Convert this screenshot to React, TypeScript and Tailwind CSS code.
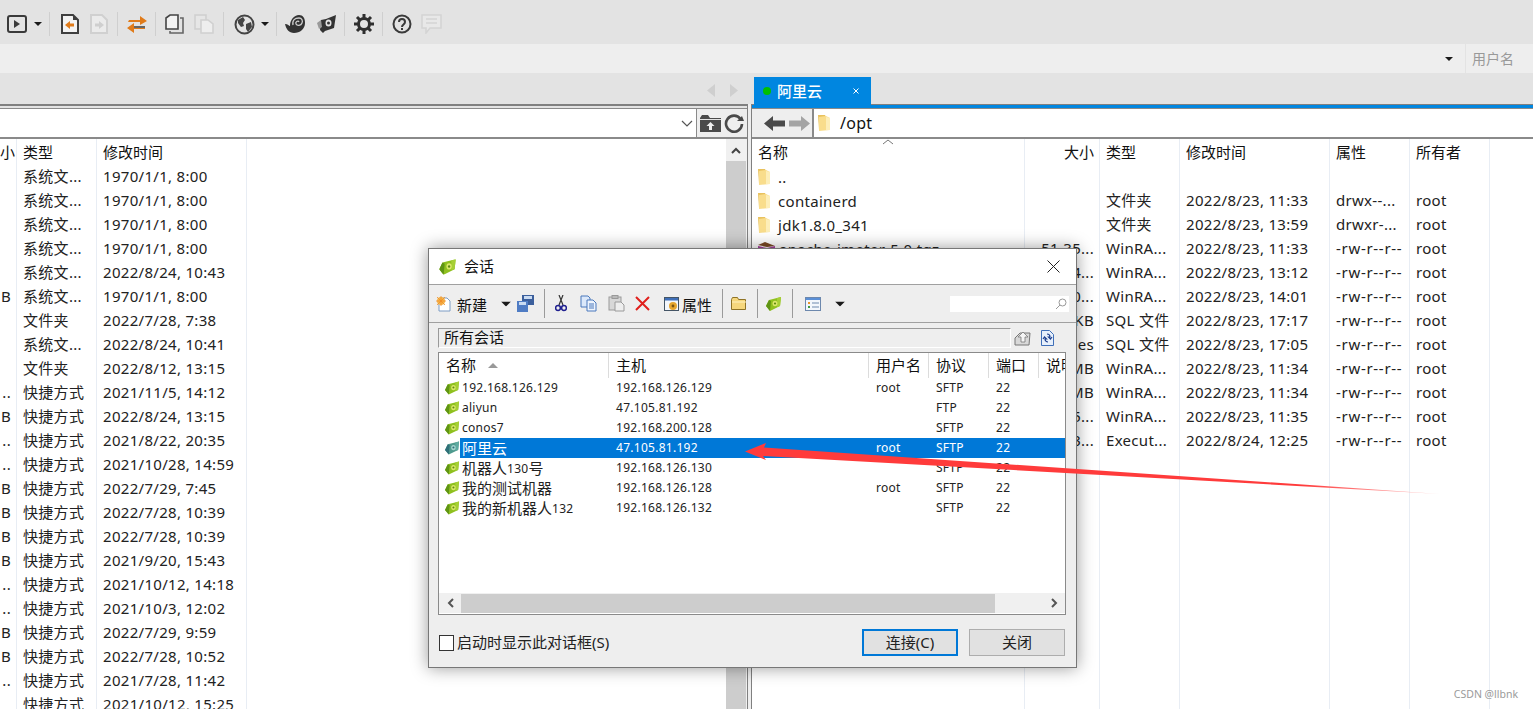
import React from "react";

const Sep = ({ ml }: { ml: string }) => <div className={`w-px h-[24px] bg-[#cfcfcf] ${ml}`} />;
const Caret = ({ cls = "" }: { cls?: string }) => (
  <svg width="8" height="4" viewBox="0 0 8 4" className={cls}><path d="M0 0h8L4 4z" fill="#1a1a1a" /></svg>
);

const Folder = ({ cls = "" }: { cls?: string }) => (
  <svg width="13" height="18" viewBox="0 0 13 18" className={cls}>
    <path d="M0 1h7l1 2v13H1z" fill="#e9c25e" />
    <path d="M1 3l7-1 4 2v12l-11 1z" fill="#f9dd8c" />
    <path d="M8 3l4 1v12H8z" fill="#fdeeb8" />
  </svg>
);

const Session = ({ gray = false, cls = "" }: { gray?: boolean; cls?: string }) => (
  <svg width="16" height="14" viewBox="0 0 16 14" className={cls}>
    <path d="M0 9l3-6 12-3-1 9-10 5z" fill={gray ? "#4f9a8e" : "#8fc01f"} />
    <path d="M0 9l3-6 2 1-1 10z" fill={gray ? "#2f6f78" : "#5f9414"} />
    <path d="M11 1l4-1-1 9-3 1z" fill={gray ? "#5faaa0" : "#a6cf35"} />
    <ellipse cx="9" cy="6.500" rx="2.400" ry="2.800" fill={gray ? "#a5d5cf" : "#dbe86a"} />
    <circle cx="9" cy="6.500" r="1.100" fill={gray ? "#2f6f78" : "#5f8a14"} />
  </svg>
);

const leftRows: [string, string, string][] = [
  ["", "系统文...", "1970/1/1, 8:00"],
  ["", "系统文...", "1970/1/1, 8:00"],
  ["", "系统文...", "1970/1/1, 8:00"],
  ["", "系统文...", "1970/1/1, 8:00"],
  ["", "系统文...", "2022/8/24, 10:43"],
  ["B", "系统文...", "1970/1/1, 8:00"],
  ["", "文件夹", "2022/7/28, 7:38"],
  ["", "系统文...", "2022/8/24, 10:41"],
  ["", "文件夹", "2022/8/12, 13:15"],
  ["..", "快捷方式", "2021/11/5, 14:12"],
  ["B", "快捷方式", "2022/8/24, 13:15"],
  ["..", "快捷方式", "2021/8/22, 20:35"],
  ["..", "快捷方式", "2021/10/28, 14:59"],
  ["B", "快捷方式", "2022/7/29, 7:45"],
  ["B", "快捷方式", "2022/7/28, 10:39"],
  ["B", "快捷方式", "2022/7/28, 10:39"],
  ["B", "快捷方式", "2021/9/20, 15:43"],
  ["..", "快捷方式", "2021/10/12, 14:18"],
  ["..", "快捷方式", "2021/10/3, 12:02"],
  ["B", "快捷方式", "2022/7/29, 9:59"],
  ["B", "快捷方式", "2022/7/28, 10:52"],
  ["..", "快捷方式", "2021/7/28, 11:42"],
  ["", "快捷方式", "2021/10/12, 15:25"],
];

const rightRows: [string, string, string, string, string, string][] = [
  ["..", "", "", "", "", ""],
  ["containerd", "", "文件夹", "2022/8/23, 11:33", "drwx--...", "root"],
  ["jdk1.8.0_341", "", "文件夹", "2022/8/23, 13:59", "drwxr-...", "root"],
  ["apache-jmeter-5.0.tgz", "51.35...", "WinRA...", "2022/8/23, 11:33", "-rw-r--r--", "root"],
  ["", "4...", "WinRA...", "2022/8/23, 13:12", "-rw-r--r--", "root"],
  ["", "0...", "WinRA...", "2022/8/23, 14:01", "-rw-r--r--", "root"],
  ["", "KB", "SQL 文件", "2022/8/23, 17:17", "-rw-r--r--", "root"],
  ["", "es", "SQL 文件", "2022/8/23, 17:05", "-rw-r--r--", "root"],
  ["", "MB", "WinRA...", "2022/8/23, 11:34", "-rw-r--r--", "root"],
  ["", "MB", "WinRA...", "2022/8/23, 11:34", "-rw-r--r--", "root"],
  ["", "5...", "WinRA...", "2022/8/23, 11:35", "-rw-r--r--", "root"],
  ["", "3...", "Execut...", "2022/8/24, 12:25", "-rw-r--r--", "root"],
];

const sessions = [
  ["192.168.126.129", "192.168.126.129", "root", "SFTP"],
  ["aliyun", "47.105.81.192", "", "FTP"],
  ["conos7", "192.168.200.128", "", "SFTP"],
  ["阿里云", "47.105.81.192", "root", "SFTP"],
  ["机器人130号", "192.168.126.130", "", "SFTP"],
  ["我的测试机器", "192.168.126.128", "root", "SFTP"],
  ["我的新机器人132", "192.168.126.132", "", "SFTP"],
];

function TopToolbar() {
  return (
    <div className="h-[44px] bg-[#e3e3e3] flex items-center shrink-0 pt-[4px]">
      <svg width="20" height="20" viewBox="0 0 20 20" className="ml-[7px]">
        <rect x="1" y="2" width="18" height="16" rx="2" fill="none" stroke="#3a3a3a" strokeWidth="2" />
        <path d="M7 6l6 4-6 4z" fill="#3a3a3a" />
      </svg>
      <Caret cls="ml-[7px]" />
      <Sep ml="ml-[7px]" />
      <svg width="18" height="20" viewBox="0 0 18 20" className="ml-[11px]">
        <path d="M1 1h11l5 5v13H1z" fill="#f3f3f3" stroke="#3f3f3f" strokeWidth="2" />
        <path d="M12 1l5 5h-5z" fill="#3f3f3f" />
        <path d="M4 11l5-4v2.500h4v3H9V15z" fill="#e07b1a" />
      </svg>
      <svg width="18" height="20" viewBox="0 0 18 20" className="ml-[11px]">
        <path d="M1 1h11l5 5v13H1z" fill="#ebebeb" stroke="#d0d0d0" strokeWidth="2" />
        <path d="M14 11l-5-4v2.500H5v3h4V15z" fill="#cfcfcf" />
      </svg>
      <Sep ml="ml-[9px]" />
      <svg width="22" height="20" viewBox="0 0 22 20" className="ml-[8px]">
        <path d="M3 6h11V2l7 5-7 4V8H2z" fill="#e07b1a" />
        <path d="M19 12H8V9L1 14l7 5v-4h11z" fill="#e07b1a" />
        <path d="M8 12h11v2H8z" fill="#666" />
      </svg>
      <Sep ml="ml-[7px]" />
      <svg width="20" height="20" viewBox="0 0 20 20" className="ml-[9px]">
        <path d="M1 4l4-3h8v14H1z" fill="#f3f3f3" stroke="#444" strokeWidth="1.600" />
        <path d="M15 4h3v15H5v-2" fill="none" stroke="#666" strokeWidth="1.600" />
      </svg>
      <svg width="20" height="20" viewBox="0 0 20 20" className="ml-[9px]">
        <rect x="1" y="1" width="11" height="14" fill="#e6e6e6" stroke="#d0d0d0" strokeWidth="1.600" />
        <path d="M7 6h7l5 4v9H7z" fill="#eee" stroke="#d0d0d0" strokeWidth="1.600" />
      </svg>
      <Sep ml="ml-[9px]" />
      <svg width="21" height="21" viewBox="0 0 21 21" className="ml-[10px]">
        <circle cx="10.500" cy="10.500" r="9" fill="#e3e3e3" stroke="#444" strokeWidth="2" />
        <path d="M4 6l5-3 2 3-2 3 1 3-3 1-3-4zM12 10l5-2 1 5-4 5-2-3z" fill="#444" />
      </svg>
      <Caret cls="ml-[6px]" />
      <Sep ml="ml-[7px]" />
      <svg width="22" height="20" viewBox="0 0 22 20" className="ml-[7px]">
        <path d="M1 10c3 0 4 2 5 2 0-6 4-11 9-11 4 0 6 3 6 8 0 6-5 10-11 10C5 19 2 15 1 10z" fill="#333" />
        <path d="M9 11c-1-5 2-7 6-7 3 0 4 3 3 5-1 3-5 3-6 1-1-2 2-4 3-2" fill="none" stroke="#cfcfcf" strokeWidth="1.300" />
      </svg>
      <svg width="21" height="20" viewBox="0 0 21 20" className="ml-[10px]">
        <path d="M5 6l5-1 10-4-2 13-9 3-2 2-3-3z" fill="#333" />
        <path d="M1 9l4-3 1 7-3 2z" fill="#9a9a9a" />
        <ellipse cx="12.500" cy="9" rx="3" ry="3.600" fill="#e3e3e3" />
        <circle cx="12.500" cy="9" r="1.500" fill="#333" />
      </svg>
      <Sep ml="ml-[7px]" />
      <svg width="20" height="20" viewBox="0 0 20 20" className="ml-[9px]">
        <circle cx="10" cy="10" r="5.500" fill="none" stroke="#2f2f2f" strokeWidth="3" />
        <path d="M10 0v4M10 16v4M0 10h4M16 10h4M3 3l3 3M14 14l3 3M17 3l-3 3M6 14l-3 3" stroke="#2f2f2f" strokeWidth="3" />
      </svg>
      <Sep ml="ml-[8px]" />
      <svg width="20" height="20" viewBox="0 0 20 20" className="ml-[9px]">
        <circle cx="10" cy="10" r="8.500" fill="none" stroke="#3a3a3a" strokeWidth="2" />
        <path d="M7 8c0-4 6-4 6 0 0 2.500-3 2.500-3 5" fill="none" stroke="#3a3a3a" strokeWidth="2" />
        <rect x="9" y="14" width="2" height="2" fill="#3a3a3a" />
      </svg>
      <svg width="21" height="20" viewBox="0 0 21 20" className="ml-[9px]">
        <path d="M1 1h19v13H9l-4 5v-5H1z" fill="#e8e8e8" stroke="#d4d4d4" strokeWidth="1.600" />
        <path d="M5 5h11M5 9h11" stroke="#d4d4d4" strokeWidth="1.400" />
      </svg>
    </div>
  );
}

function LeftPane() {
  return (
    <div className="w-[747px] shrink-0 flex flex-col border-t-2 border-[#808080] h-full overflow-hidden">
      <div className="h-[3px] bg-[#e3e3e3] border-b border-[#8a8a8a] shrink-0" />
      <div className="h-[30px] flex shrink-0 border-b-2 border-[#8a8a8a]">
        <div className="w-[697px] bg-white border-r border-[#8a8a8a] flex items-center justify-end pr-[3px]">
          <svg width="12" height="7" viewBox="0 0 12 7"><path d="M1 1l5 5 5-5" fill="none" stroke="#555" strokeWidth="1.200" /></svg>
        </div>
        <div className="flex-1 bg-[#eeeeee] flex items-center pl-[3px] gap-[3px]">
          <svg width="21" height="17" viewBox="0 0 21 17">
            <path d="M0 3l2-3h6l2 3h11v14H0z" fill="#4a4a4a" />
            <path d="M0 4h21v1H0z" fill="#e3e3e3" />
            <path d="M10.500 7l4 4h-2.500v4h-3v-4H6.500z" fill="#eee" />
          </svg>
          <svg width="20" height="20" viewBox="0 0 20 20">
            <path d="M16.500 6A8 8 0 1 0 18 11" fill="none" stroke="#4a4a4a" strokeWidth="2.600" />
            <path d="M20 8h-7l5-5z" fill="#4a4a4a" />
          </svg>
        </div>
      </div>
      <div className="flex flex-1 min-h-0">
        <div className="w-[726px] bg-white flex flex-col overflow-hidden">
          <div className="grid grid-cols-[17px_80px_150px_1fr] h-[26px] shrink-0 text-[15px] text-[#111]">
            <div className="border-r border-[#e8edf4] text-right pr-[5px] leading-[26px]">小</div>
            <div className="border-r border-[#e8edf4] pl-[6px] leading-[26px]">类型</div>
            <div className="border-r border-[#e8edf4] pl-[6px] leading-[26px]">修改时间</div>
            <div />
          </div>
          {leftRows.map((r, i) => (
            <div key={i} className="grid grid-cols-[17px_80px_150px_1fr] h-[24px] shrink-0 text-[15px] text-[#222] tracking-[0.3px]">
              <div className="border-r border-[#e8edf4] text-right pr-[5px] leading-[23px]">{r[0]}</div>
              <div className="border-r border-[#e8edf4] pl-[6px] leading-[23px] whitespace-nowrap">{r[1]}</div>
              <div className="border-r border-[#e8edf4] pl-[6px] leading-[23px] whitespace-nowrap">{r[2]}</div>
              <div />
            </div>
          ))}
        </div>
        <div className="w-[20px] bg-[#f0f0f0] flex flex-col shrink-0">
          <div className="h-[22px] flex items-center justify-center">
            <svg width="10" height="7" viewBox="0 0 10 7"><path d="M1 6l4-4 4 4" fill="none" stroke="#444" strokeWidth="2" /></svg>
          </div>
          <div className="flex-1 bg-[#cdcdcd]" />
        </div>
        <div className="w-px bg-[#f0f0f0]" />
      </div>
    </div>
  );
}

function RightPane() {
  const col = "grid grid-cols-[273px_75px_80px_150px_80px_80px_1fr]";
  const cell = "border-r border-[#e8edf4]";
  return (
    <div className="flex-1 min-w-0 flex flex-col h-full overflow-hidden border-l border-[#808080]">
      <div className="h-[5px] shrink-0 border-t border-[#808080] bg-[#0086e0] border-b border-b-[#8a8a8a]" />
      <div className="h-[30px] flex shrink-0 border-b-2 border-[#8a8a8a]">
        <div className="w-[60px] bg-[#eeeeee] flex items-center pl-[12px] gap-[4px]">
          <svg width="21" height="15" viewBox="0 0 21 15"><path d="M0 7.500L9 0v4.500h12v6H9V15z" fill="#4a4a4a" /></svg>
          <svg width="21" height="15" viewBox="0 0 21 15"><path d="M21 7.500L12 0v4.500H0v6h12V15z" fill="#a4a4a4" /></svg>
        </div>
        <div className="flex-1 bg-white border-l-2 border-[#8a8a8a] flex items-center pl-[4px]">
          <Folder />
          <span className="ml-[9px] text-[16px] text-[#111] tracking-[0.3px]">/opt</span>
        </div>
      </div>
      <div className="flex-1 min-h-0 bg-white flex flex-col overflow-hidden relative">
        <svg width="10" height="6" viewBox="0 0 10 6" className="absolute left-[131px] top-0"><path d="M0 5l5-4 5 4" fill="none" stroke="#777" strokeWidth="1" /></svg>
        <div className={`${col} h-[26px] shrink-0 text-[15px] text-[#111] leading-[26px]`}>
          <div className={`${cell} pl-[6px]`}>名称</div>
          <div className={`${cell} text-right pr-[5px]`}>大小</div>
          <div className={`${cell} pl-[6px]`}>类型</div>
          <div className={`${cell} pl-[6px]`}>修改时间</div>
          <div className={`${cell} pl-[6px]`}>属性</div>
          <div className={`${cell} pl-[6px]`}>所有者</div>
          <div />
        </div>
        {Array.from({ length: 23 }).map((_, i) => {
          const r = rightRows[i];
          return (
            <div key={i} className={`${col} h-[24px] shrink-0 text-[15px] text-[#222] leading-[23px] whitespace-nowrap tracking-[0.3px]`}>
              <div className={`${cell} flex items-center pl-[6px] overflow-hidden`}>
                {r && i < 3 && <Folder />}
                {r && i === 3 && (
                  <svg width="20" height="18" viewBox="0 0 20 18" className="ml-[-1px] mr-[-1px]">
                    <path d="M1 5l7-3 10 4-8 1z" fill="#7a4a24" />
                    <path d="M1 6l9 2 8-2v4H1z" fill="#a63fa0" />
                    <path d="M1 10h17v4H1z" fill="#5a5a8a" />
                  </svg>
                )}
                {r && r[0] && <span className={i === 3 ? "ml-[3px]" : "ml-[7px]"}>{r[0]}</span>}
              </div>
              <div className={`${cell} text-right pr-[5px]`}>{r ? r[1] : ""}</div>
              <div className={`${cell} pl-[6px]`}>{r ? r[2] : ""}</div>
              <div className={`${cell} pl-[6px]`}>{r ? r[3] : ""}</div>
              <div className={`${cell} pl-[6px] ${r && r[4].startsWith("-") ? "tracking-[0.7px]" : ""}`}>{r ? r[4] : ""}</div>
              <div className={`${cell} pl-[6px]`}>{r ? r[5] : ""}</div>
              <div />
            </div>
          );
        })}
      </div>
    </div>
  );
}

function DialogToolbar() {
  const dsep = "w-px h-[29px] bg-[#9a9a9a]";
  return (
    <div className="h-[38px] flex items-center border-b border-[#a0a0a0] shrink-0 relative pl-[7px] text-[15px] text-[#111]">
      <svg width="16" height="16" viewBox="0 0 16 16">
        <path d="M3 2h8l3 3v10H3z" fill="#fff" stroke="#7d9cc4" />
        <circle cx="5" cy="5" r="4" fill="#f6b84a" />
        <path d="M1 1l8 8M9 1L1 9M5 0v10M0 5h10" stroke="#f08a2a" strokeWidth="0.800" />
      </svg>
      <span className="ml-[5px] w-[30px] mt-[3px]">新建</span>
      <Caret cls="ml-[15px] scale-125" />
      <svg width="17" height="17" viewBox="0 0 17 17" className="ml-[7px]">
        <path d="M5 0h12v10H5z" fill="#3b5f9c" />
        <path d="M0 6h11v11H0z" fill="#4f7cc4" />
        <path d="M2 7h7v3H2z" fill="#c9dbf2" />
        <path d="M7 1h8v3H7z" fill="#c9dbf2" />
      </svg>
      <div className={`${dsep} ml-[10px]`} />
      <svg width="12" height="17" viewBox="0 0 12 17" className="ml-[10px]">
        <path d="M4 0l4 10M8 0L4 10" stroke="#333" strokeWidth="1.200" />
        <circle cx="3" cy="13" r="2.400" fill="none" stroke="#1f1f8f" strokeWidth="1.500" />
        <circle cx="9" cy="13" r="2.400" fill="none" stroke="#1f1f8f" strokeWidth="1.500" />
      </svg>
      <svg width="17" height="17" viewBox="0 0 17 17" className="ml-[13px]">
        <path d="M1 1h7l2 2v9H1z" fill="#dbe8fa" stroke="#4a78bc" />
        <path d="M7 5h6l3 3v8H7z" fill="#eef4fd" stroke="#4a78bc" />
        <path d="M9 9h5M9 11h5M9 13h5" stroke="#4a78bc" />
      </svg>
      <svg width="17" height="17" viewBox="0 0 17 17" className="ml-[11px]">
        <rect x="1" y="2" width="12" height="13" fill="#d8d8d8" stroke="#9a9a9a" />
        <rect x="4" y="0.500" width="6" height="3" fill="#bbb" stroke="#9a9a9a" />
        <path d="M7 7h6l3 3v6H7z" fill="#eee" stroke="#9a9a9a" />
      </svg>
      <svg width="15" height="15" viewBox="0 0 15 15" className="ml-[10px]">
        <path d="M1 1l13 13M14 1L1 14" stroke="#e0201c" strokeWidth="2" />
      </svg>
      <svg width="16" height="16" viewBox="0 0 16 16" className="ml-[14px]">
        <rect x="0.500" y="1.500" width="14" height="13" fill="#f4f7fb" stroke="#456" />
        <path d="M1 2h13v2.500H1z" fill="#3f6fb8" />
        <circle cx="9" cy="10" r="4" fill="#e6a62e" />
        <circle cx="9" cy="10" r="1.400" fill="#7a5513" />
      </svg>
      <span className="ml-[2px] w-[30px] mt-[3px]">属性</span>
      <div className={`${dsep} ml-[10px]`} />
      <svg width="16" height="13" viewBox="0 0 16 13" className="ml-[8px]">
        <path d="M0.500 2.500l1-2h5l1 2h7v10H0.500z" fill="#f6d77c" stroke="#8f7326" />
        <path d="M1 5h14" stroke="#fff2bf" />
      </svg>
      <div className={`${dsep} ml-[10px]`} />
      <Session cls="ml-[8px]" />
      <div className={`${dsep} ml-[10px]`} />
      <svg width="16" height="14" viewBox="0 0 16 14" className="ml-[12px]">
        <rect x="0.500" y="0.500" width="15" height="13" fill="#f2f6fc" stroke="#6d88ad" />
        <path d="M1 1h14v2H1z" fill="#5a8fd6" />
        <path d="M3 5h2v2H3z" fill="#e9952c" />
        <path d="M3 9h2v2H3z" fill="#3e9a3e" />
        <path d="M7 6h7M7 10h7" stroke="#6d88ad" />
      </svg>
      <Caret cls="ml-[15px] scale-125" />
      <div className="ml-auto mr-[7px] w-[119px] h-[16px] bg-white flex items-center justify-end pr-[2px]">
        <svg width="12" height="12" viewBox="0 0 12 12"><circle cx="7.500" cy="4.500" r="3.500" fill="none" stroke="#999" /><path d="M5 7l-4 4" stroke="#999" /></svg>
      </div>
    </div>
  );
}

function NameText({ text }: { text: string }) {
  const parts = text.split(/([\u4e00-\u9fff]+)/).filter(Boolean);
  return (
    <>
      {parts.map((p, i) => (
        <span key={i} className={/[\u4e00-\u9fff]/.test(p) ? "text-[15px] tracking-normal mb-[2px]" : "text-[12px]"}>{p}</span>
      ))}
    </>
  );
}

function SessionDialog() {
  const hdr = "border-r border-[#dcdcdc] pl-[7px] leading-[25px] whitespace-nowrap overflow-hidden";
  return (
    <div className="absolute left-[428px] top-[248px] w-[649px] h-[420px] bg-[#eeeeee] border border-[#777] shadow-[0_0_16px_rgba(0,0,0,0.4)] flex flex-col">
      <div className="h-[36px] bg-white flex items-center pl-[11px] border-b border-[#a0a0a0] shrink-0 text-[15px] text-[#111]">
        <Session cls="scale-110" />
        <span className="ml-[8px]">会话</span>
        <svg width="13" height="13" viewBox="0 0 13 13" className="ml-auto mr-[16px]"><path d="M0.500 0.500l12 12M12.500 0.500l-12 12" stroke="#222" strokeWidth="1" /></svg>
      </div>
      <DialogToolbar />
      <div className="flex items-center h-[20px] mt-[5px] ml-[9px] shrink-0">
        <div className="w-[573px] h-[20px] border-t border-l border-[#9a9a9a] pl-[5px] text-[15px] text-[#111] leading-[16px] border-r border-r-white border-b border-b-white">所有会话</div>
        <svg width="17" height="16" viewBox="0 0 17 16" className="ml-[3px]">
          <path d="M1 8l5-5h10l-1 12H1z" fill="#d8d8d8" stroke="#777" />
          <path d="M9 2l5 5h-3v5H7V7H4z" fill="#f4f4f4" stroke="#777" strokeWidth="0.800" />
        </svg>
        <svg width="13" height="16" viewBox="0 0 13 16" className="ml-[10px]">
          <path d="M0.500 0.500h8l4 4v11h-12z" fill="#e6effb" stroke="#3f6fb8" />
          <path d="M6 4a3 3 0 0 1 3 3H7.500L9.500 9l1.500-2M7 12a3 3 0 0 1-3-3h1.500L3.500 7 2 9" fill="none" stroke="#1d3f8f" strokeWidth="1.200" />
        </svg>
      </div>
      <div className="ml-[9px] mt-[4px] w-[628px] h-[263px] border border-[#8a8a8a] bg-white shrink-0 flex flex-col overflow-hidden">
        <div className="grid grid-cols-[170px_260px_60px_60px_50px_40px] h-[25px] shrink-0 text-[15px] text-[#111]">
          <div className={`${hdr} flex items-center`}>名称
            <svg width="10" height="5" viewBox="0 0 10 5" className="ml-[12px]"><path d="M0 5l5-5 5 5z" fill="#999" /></svg>
          </div>
          <div className={hdr}>主机</div>
          <div className={hdr}>用户名</div>
          <div className={hdr}>协议</div>
          <div className={hdr}>端口</div>
          <div className="pl-[7px] leading-[25px] overflow-hidden whitespace-nowrap">说明</div>
        </div>
        <div className="flex-1 min-h-0">
          {sessions.map((s, i) => {
            const sel = i === 3;
            return (
              <div key={i} className="flex h-[20px] text-[12px] leading-[20px] whitespace-nowrap tracking-[0.27px]">
                <div className="w-[21px] flex items-center pl-[6px] shrink-0"><Session gray={sel} /></div>
                <div className={`flex-1 grid grid-cols-[149px_260px_60px_60px_50px] ${sel ? "bg-[#0078d7] text-white" : "text-[#222]"}`}>
                  <div className="pl-[2px] flex items-center">
                    <NameText text={s[0]} />
                  </div>
                  <div className="pl-[7px]">{s[1]}</div>
                  <div className="pl-[7px]">{s[2]}</div>
                  <div className="pl-[7px]">{s[3]}</div>
                  <div className="pl-[7px]">22</div>
                </div>
              </div>
            );
          })}
        </div>
        <div className="h-[20px] bg-[#f0f0f0] flex items-center shrink-0 mb-[1px]">
          <div className="w-[22px] flex justify-center">
            <svg width="7" height="10" viewBox="0 0 7 10"><path d="M6 1L2 5l4 4" fill="none" stroke="#555" strokeWidth="2" /></svg>
          </div>
          <div className="w-[534px] h-[19px] bg-[#cdcdcd]" />
          <div className="flex-1" />
          <div className="w-[22px] flex justify-center">
            <svg width="7" height="10" viewBox="0 0 7 10"><path d="M1 1l4 4-4 4" fill="none" stroke="#555" strokeWidth="2" /></svg>
          </div>
        </div>
      </div>
      <div className="flex items-center mt-[14px] ml-[10px] mr-[11px] h-[27px] shrink-0 text-[15px] text-[#222]">
        <div className="w-[15px] h-[16px] border border-[#333] bg-white" />
        <span className="ml-[3px]">启动时显示此对话框(S)</span>
        <div className="ml-auto w-[96px] h-[27px] border-2 border-[#0078d7] bg-[#e1e1e1] flex items-center justify-center">连接(C)</div>
        <div className="ml-[11px] w-[96px] h-[27px] border border-[#adadad] bg-[#e1e1e1] flex items-center justify-center">关闭</div>
      </div>
    </div>
  );
}

export default function App() {
  return (
    <div className="relative w-[1533px] h-[709px] overflow-hidden flex flex-col bg-white font-['Noto_Sans','Noto_Sans_CJK_SC',sans-serif]">
      <TopToolbar />
      <div className="h-[29px] bg-[#eeeeee] shrink-0 flex items-center justify-end">
        <Caret cls="mr-[12px]" />
        <div className="w-px h-[29px] bg-[#e3e3e3]" />
        <div className="w-[67px] pl-[6px] text-[14px] text-[#999]">用户名</div>
      </div>
      <div className="h-[31px] bg-[#e3e3e3] shrink-0 flex items-end">
        <div className="w-[703px] shrink-0" />
        <div className="h-[28px] flex items-center">
          <svg width="10" height="13" viewBox="0 0 10 13" className="ml-[3px]"><path d="M9 0v13L1 6.500z" fill="#cfcfcf" /></svg>
          <svg width="10" height="13" viewBox="0 0 10 13" className="ml-[13px]"><path d="M1 0v13l8-6.500z" fill="#cfcfcf" /></svg>
        </div>
        <div className="ml-[15px] w-[117px] h-[28px] bg-[#0086e0] flex items-center text-white text-[15px] relative top-[1px]">
          <span className="ml-[9px] w-[8px] h-[8px] rounded-full bg-[#00c000]" />
          <span className="ml-[6px] font-medium">阿里云</span>
          <svg width="6" height="6" viewBox="0 0 6 6" className="ml-auto mr-[12px]"><path d="M0.500 0.500l5 5M5.500 0.500l-5 5" stroke="#fff" /></svg>
        </div>
      </div>
      <div className="flex flex-1 min-h-0">
        <LeftPane />
        <div className="w-[4px] shrink-0 bg-[#eeeeee] border-l border-[#808080]" />
        <RightPane />
      </div>
      <SessionDialog />
      <svg width="1533" height="709" viewBox="0 0 1533 709" className="absolute left-0 top-0 pointer-events-none">
        <defs>
          <linearGradient id="arrowFade" x1="745" y1="0" x2="1440" y2="0" gradientUnits="userSpaceOnUse">
            <stop offset="0" stopColor="#ff3b3b" />
            <stop offset="0.8" stopColor="#ff3b3b" />
            <stop offset="1" stopColor="#ffd0d0" />
          </linearGradient>
        </defs>
        <path d="M745 451.500L766 443 764 447.500 1440 494 763 456 766 460z" fill="url(#arrowFade)" />
      </svg>
      <div className="absolute right-[15px] bottom-[6px] text-[10.500px] text-[#9a9a9a]">CSDN @llbnk</div>
    </div>
  );
}
